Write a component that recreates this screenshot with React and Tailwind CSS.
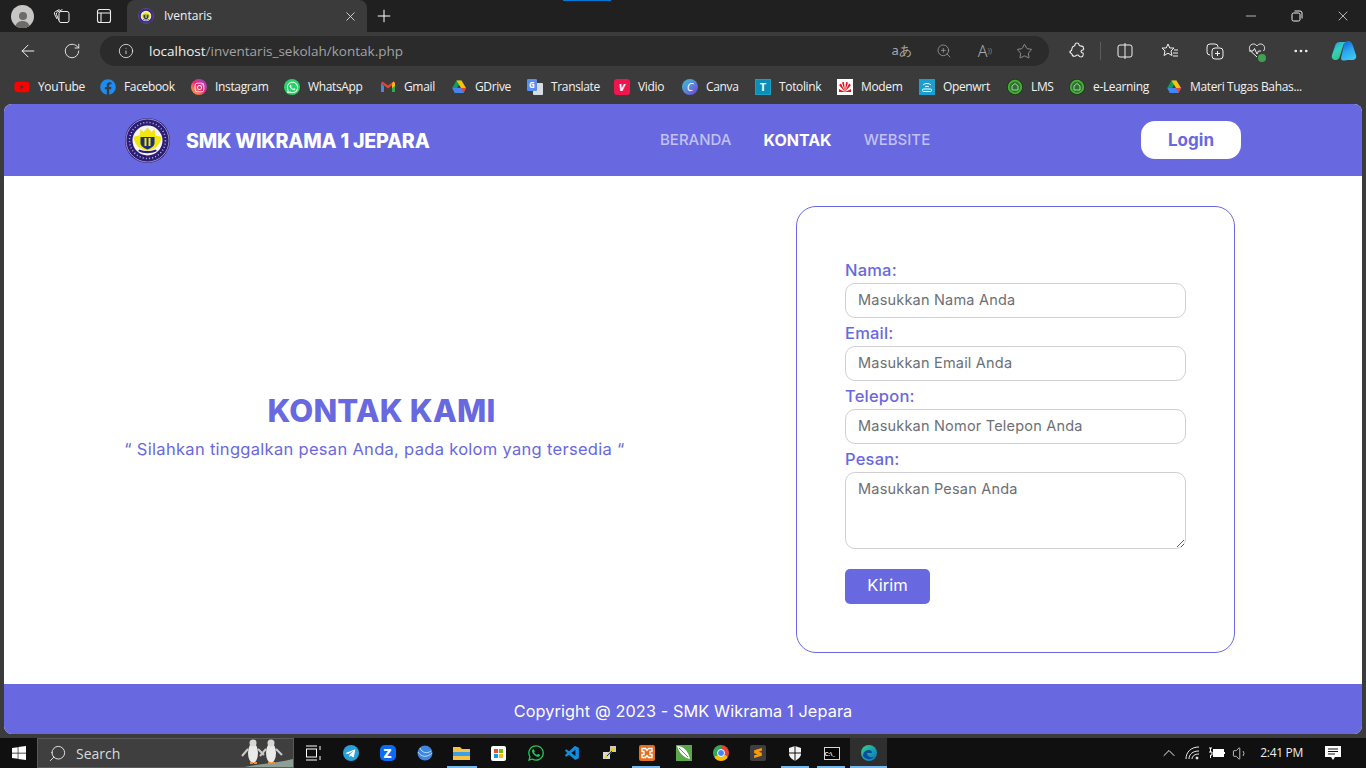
import {
  ArrowLeft, RotateCw, Info, ZoomIn, Star, Plus, X, Minus, Search, ChevronUp, Volume1, MoreHorizontal,
} from "lucide-react";
import {
  FaYoutube, FaFacebook, FaInstagram, FaWhatsapp, FaTelegramPlane, FaWindows,
} from "react-icons/fa";
import { SiSublimetext } from "react-icons/si";
import { VscVscode } from "react-icons/vsc";

const CHROME_FONT = "font-['Open_Sans','Noto_Sans',sans-serif]";

function SchoolLogo({ size = 45 }) {
  return (
    <svg width={size} height={size} viewBox="0 0 45 45" className="shrink-0">
      <circle cx="22.5" cy="22.5" r="22.500" fill="#2b1c74" />
      <circle cx="22.5" cy="22.5" r="21.500" fill="none" stroke="#cfcde8" strokeWidth="0.700" />
      <circle cx="22.5" cy="22.5" r="18" fill="none" stroke="#bdb9e2" strokeWidth="1.500" strokeDasharray="1 2.200" />
      <circle cx="22.5" cy="22.5" r="15" fill="#f4f4fa" />
      <path d="M8.500 19c2-1 4-1.500 6-1.500l1-6.500 3 3 4-4.500 4 4.500 3-3 1 6.500c2 0 4 .5 6 1.500-1 7-5 12-14 14-9-2-13-7-14-14z" fill="#f3e60c" />
      <path d="M15.500 19h14v6c0 3-3 5-7 6.500-4-1.500-7-3.500-7-6.500z" fill="#1c2f78" />
      <path d="M19.500 20h2v8h-2zM23.500 20h2v8h-2z" fill="#f3e60c" />
      <path d="M13 33c6 3 13 3 19 0l-1.500-1.500c-5 2-11 2-16 0z" fill="#2b1c74" />
    </svg>
  );
}

function Gmail() {
  return (
    <svg width="16" height="16" viewBox="0 0 16 16">
      <path d="M1 4v9h3V7z" fill="#4285f4" />
      <path d="M15 4v9h-3V7z" fill="#34a853" />
      <path d="M1 4l7 5.500L15 4l-1.500-1.500L8 6.500 2.500 2.500z" fill="#ea4335" />
      <path d="M12 4.500l1.500-2L15 4v3l-3 2z" fill="#fbbc04" />
    </svg>
  );
}

function Drive() {
  return (
    <svg width="16" height="16" viewBox="0 0 16 16">
      <path d="M5.500 1.500h5L6.200 9H1.200z" fill="#0f9d58" />
      <path d="M10.500 1.500L15 9h-5L5.500 1.500z" fill="#ffc107" />
      <path d="M1.200 9h13.800l-2.500 5H3.700z" fill="#4285f4" />
      <path d="M10 9h5l-2.500 5z" fill="#ea4335" />
    </svg>
  );
}

function Tile({ bg, children }) {
  return <span className={`flex h-4 w-4 items-center justify-center rounded-[3px] text-white ${bg}`}>{children}</span>;
}

function LmsIcon() {
  return (
    <svg width="16" height="16" viewBox="0 0 16 16">
      <circle cx="8" cy="8" r="8" fill="#1b3a1b" />
      <circle cx="8" cy="8" r="6.300" fill="#2f6e34" stroke="#4caf38" strokeWidth="1.800" />
      <path d="M5 11V7l3-2.500L11 7v4z" fill="none" stroke="#9adf8c" strokeWidth="1" />
    </svg>
  );
}

function TranslateIcon() {
  return (
    <span className="relative block h-4 w-4">
      <span className="absolute bottom-0 right-0 h-3 w-[10px] rounded-[1px] bg-[#d8dde3]" />
      <span className="absolute left-0 top-0 flex h-3 w-[10px] items-center justify-center rounded-[1px] bg-[#5a8df0] text-[8px] font-bold leading-none text-white">G</span>
    </span>
  );
}

const BOOKMARKS = [
  { label: "YouTube", w: "w-[86px]", icon: <FaYoutube size={16} className="text-[#ff0000]" /> },
  { label: "Facebook", w: "w-[91px]", icon: <FaFacebook size={16} className="text-[#1b8cf2]" /> },
  { label: "Instagram", w: "w-[93px]", icon: <Tile bg="rounded-full bg-gradient-to-tr from-[#fdb32b] via-[#e8246c] to-[#8a30d8]"><FaInstagram size={11} /></Tile> },
  { label: "WhatsApp", w: "w-[96px]", icon: <Tile bg="rounded-full bg-[#25d366]"><FaWhatsapp size={13} /></Tile> },
  { label: "Gmail", w: "w-[71px]", icon: <Gmail /> },
  { label: "GDrive", w: "w-[76px]", icon: <Drive /> },
  { label: "Translate", w: "w-[87px]", icon: <TranslateIcon /> },
  { label: "Vidio", w: "w-[68px]", icon: <Tile bg="bg-[#f0144f] text-[12px] font-bold italic">v</Tile> },
  { label: "Canva", w: "w-[73px]", icon: <Tile bg="rounded-full bg-gradient-to-br from-[#18c2cf] to-[#6a35dc] text-[11px] italic">C</Tile> },
  { label: "Totolink", w: "w-[82px]", icon: <Tile bg="rounded-none border border-[#1aa0c4] bg-[#0a8fb8] text-[11px] font-bold">T</Tile> },
  { label: "Modem", w: "w-[82px]", icon: (
    <span className="flex h-4 w-4 items-center justify-center bg-white">
      <svg width="14" height="12" viewBox="0 0 14 12"><path d="M7 11L4 1.500 6 1l1 10 1-10 2 .500zM7 11L1 4l2-1.500zM7 11l6-7-2-1.500zM7 11H1V8zM7 11h6V8z" fill="#e5141d" /></svg>
    </span>
  ) },
  { label: "Openwrt", w: "w-[88px]", icon: (
    <span className="flex h-4 w-4 items-center justify-center bg-[#1a9fd0]">
      <svg width="12" height="12" viewBox="0 0 12 12" fill="none" stroke="#fff"><path d="M2 4c2-2 6-2 8 0M4 6c1-1 3-1 4 0" /><rect x="1.500" y="8" width="9" height="2.500" rx="1" /></svg>
    </span>
  ) },
  { label: "LMS", w: "w-[62px]", icon: <LmsIcon /> },
  { label: "e-Learning", w: "w-[97px]", icon: <LmsIcon /> },
  { label: "Materi Tugas Bahas...", w: "w-[150px]", icon: <Drive /> },
];

function Bookmark({ item }) {
  return (
    <div className={`flex shrink-0 items-center gap-2 ${item.w}`}>
      <span className="flex w-4 shrink-0 items-center justify-center">{item.icon}</span>
      <span className="whitespace-nowrap text-[12px] tracking-[-0.35px] text-[#f2f2f2]">{item.label}</span>
    </div>
  );
}

function TitleBar() {
  return (
    <div className="relative flex h-8 items-center bg-[#202020] text-[#ededed]">
      <div className="absolute left-[563px] top-0 h-px w-12 bg-[#0078d4]" />
      <div className="ml-[11px] flex h-[23px] w-[23px] items-end justify-center overflow-hidden rounded-full bg-[#c8c6c4]">
        <div className="flex flex-col items-center">
          <span className="h-2 w-2 rounded-full bg-[#6b6b6b]" />
          <span className="mt-px h-[7px] w-[15px] rounded-t-full bg-[#6b6b6b]" />
        </div>
      </div>
      <svg width="18" height="18" viewBox="0 0 18 18" fill="none" stroke="#ededed" strokeWidth="1" className="ml-[19px]">
        <rect x="6" y="4.500" width="10" height="11" rx="2" />
        <path d="M6 13.500L3.500 7.500a2 2 0 0 1 1-2.500l5-2.500M4 12L1.500 7a2 2 0 0 1 1-2.500l4-2" />
      </svg>
      <svg width="16" height="16" viewBox="0 0 16 16" fill="none" stroke="#ededed" strokeWidth="1.100" className="ml-[25px]">
        <rect x="1.500" y="1.500" width="13" height="13" rx="2" />
        <path d="M1.500 5h13M5 5v9.500" />
      </svg>
      <div className="ml-[15px] flex h-8 w-[240px] items-center self-end rounded-t-lg bg-[#3b3b3b]">
        <span className="ml-[11px]"><SchoolLogo size={16} /></span>
        <span className={`ml-[10px] text-[12px] text-[#f2f2f2] ${CHROME_FONT}`}>Iventaris</span>
        <X size={15} strokeWidth={1.3} className="ml-auto mr-[9px]" />
      </div>
      <Plus size={20} strokeWidth={1.2} className="ml-[7px] text-white" />
      <div className="ml-auto flex items-center text-white">
        <Minus size={16} strokeWidth={1} className="mr-[32px]" />
        <svg width="12" height="12" viewBox="0 0 12 12" fill="none" stroke="#ededed" className="mr-[32px]">
          <rect x="1" y="3" width="8" height="8" rx="1.500" />
          <path d="M3.500 1h5.500a2 2 0 0 1 2 2v5.500" />
        </svg>
        <X size={16} strokeWidth={1} className="mr-[15px]" />
      </div>
    </div>
  );
}

function ToolBar() {
  return (
    <div className="flex h-[38px] items-center bg-[#3b3b3b] text-[#f0f0f0]">
      <ArrowLeft size={20} strokeWidth={1.2} className="ml-[18px]" />
      <RotateCw size={18} strokeWidth={1.2} className="ml-[25px]" />
      <div className="ml-[19px] flex h-[30px] w-[949px] items-center rounded-full bg-[#2b2b2b]">
        <Info size={16} strokeWidth={1.2} className="ml-[18px]" />
        <span className={`ml-[15px] text-[13.500px] ${CHROME_FONT}`}>
          localhost<span className="text-[#a3a3a3]">/inventaris_sekolah/kontak.php</span>
        </span>
        <div className="ml-auto flex items-center text-[#a8a8a8]">
          <span className="mr-[24px] text-[13px]">aあ</span>
          <ZoomIn size={16} strokeWidth={1.1} className="mr-[26px]" />
          <span className="mr-[24px] text-[16px] font-light leading-none">A<sup className="text-[8px]">))</sup></span>
          <Star size={17} strokeWidth={1.1} className="mr-[16px]" />
        </div>
      </div>
      <svg width="18" height="18" viewBox="0 0 18 18" fill="none" stroke="#f0f0f0" strokeWidth="1.100" className="ml-[19px]">
        <path d="M7 3a2 2 0 0 1 4 0c0 1 3 1 4 1.500.5 1 .5 3 0 3.500-1 0-2 .5-2 1.500s1 1.500 2 1.500c.5 1 0 3-.5 3.500-1 .5-3 .5-3.500-.5-.5-1-1.500-1.200-2.500-.7-1 .5-1 1-2 1-1.500 0-2.500-1-2.500-2 0-1-1.500-1-2-1.800C2 11 2 9 3.500 8.500 4 7 4 5 5 4.500 6 4 7 4 7 3z" />
      </svg>
      <span className="ml-[14px] h-[18px] w-px bg-[#5c5c5c]" />
      <svg width="16" height="16" viewBox="0 0 16 16" fill="none" stroke="#f0f0f0" className="ml-[16px]">
        <rect x="1" y="2" width="14" height="12" rx="2" /><path d="M8 0v16" />
      </svg>
      <svg width="18" height="18" viewBox="0 0 18 18" fill="none" stroke="#f0f0f0" className="ml-[28px]">
        <path d="M7 2l1.800 4H13l-3 3 1 4.500-4-2.300-4 2.300 1-4.500-3-3h4.200zM13 8h4M12 11h5M12 14h5" />
      </svg>
      <svg width="18" height="18" viewBox="0 0 18 18" fill="none" stroke="#f0f0f0" className="ml-[27px]">
        <rect x="6" y="6" width="11" height="11" rx="3" />
        <path d="M11.500 9v5M9 11.500h5M4 13a3 3 0 0 1-3-3V5a3 3 0 0 1 3-3h5a3 3 0 0 1 3 3" />
      </svg>
      <span className="relative ml-[24px] h-[18px] w-[18px]">
        <svg width="18" height="18" viewBox="0 0 18 18" fill="none" stroke="#f0f0f0">
          <path d="M9 15L2.500 9C0 6 2 2 5.500 2 7 2 8.300 3 9 4c.7-1 2-2 3.500-2C16 2 18 6 15.500 9M1 9h4l1.500-2.500L9 12l1.500-3H13" />
        </svg>
        <span className="absolute bottom-[-2px] right-0 h-2 w-2 rounded-full bg-[#3fa34d]" />
      </span>
      <MoreHorizontal size={18} strokeWidth={1.6} className="ml-[26px]" />
      <svg width="26" height="24" viewBox="0 0 26 24" className="ml-[21px]">
        <defs>
          <linearGradient id="cp1" x1="0" y1="0" x2="0.600" y2="1"><stop offset="0" stopColor="#2a8fe0" /><stop offset="0.500" stopColor="#35d0c0" /><stop offset="1" stopColor="#2fc47a" /></linearGradient>
          <linearGradient id="cp2" x1="0.300" y1="0" x2="0.700" y2="1"><stop offset="0" stopColor="#1464d8" /><stop offset="0.500" stopColor="#2ca8f0" /><stop offset="1" stopColor="#40c8f8" /></linearGradient>
        </defs>
        <path d="M17 2c3 0 4 2 5 5l3 9c1 3-1 5-4 5h-5c-3 1-6 1-6-2l3-14c.5-2 2-3 4-3z" fill="url(#cp2)" />
        <path d="M9 3h6c-2 1-2.500 2-3 4l-3 10c-.5 2-2 4-4 4-3 0-5-2-4-5l3-9c1-3 2-4 5-4z" fill="url(#cp1)" />
      </svg>
    </div>
  );
}

function BookmarkBar() {
  return (
    <div className={`flex h-[34px] items-center bg-[#3b3b3b] pl-[14px] ${CHROME_FONT}`}>
      {BOOKMARKS.map((b) => <Bookmark key={b.label} item={b} />)}
    </div>
  );
}

function Navbar() {
  return (
    <nav className="flex h-[72px] shrink-0 items-center bg-[#6868e0] pl-[121px]">
      <SchoolLogo />
      <span className="ml-4 w-[244px] whitespace-nowrap pt-[3px] text-[19.600px] font-extrabold tracking-[-0.2px] text-white">SMK WIKRAMA 1 JEPARA</span>
      <div className="ml-[230px] flex items-center gap-8 text-[15px] font-medium text-[#c1c1f3]">
        <span>BERANDA</span>
        <span className="text-[16px] font-bold text-white">KONTAK</span>
        <span>WEBSITE</span>
      </div>
      <button className="ml-auto mr-[121px] h-[38px] w-[100px] rounded-[14px] bg-white pt-px text-[17px] font-bold text-[#6868e0]">Login</button>
    </nav>
  );
}

function Field({ label, placeholder }) {
  return (
    <div>
      <label className="block h-7 pt-[3px] text-[16.500px] font-medium leading-6 tracking-[0.2px] text-[#6868e0]">{label}</label>
      <input
        readOnly
        placeholder={placeholder}
        className="block h-[35px] w-full rounded-[10px] border border-[#cfcfd4] px-3 pb-0.5 text-[14.500px] tracking-[0.2px] placeholder:text-[#6c6f75]"
      />
    </div>
  );
}

function ContactForm() {
  return (
    <div className="ml-[172px] mt-[30px] h-[447px] w-[439px] shrink-0 self-start rounded-[20px] border border-[#6868e0] p-12">
      <Field label="Nama:" placeholder="Masukkan Nama Anda" />
      <Field label="Email:" placeholder="Masukkan Email Anda" />
      <Field label="Telepon:" placeholder="Masukkan Nomor Telepon Anda" />
      <div>
        <label className="block h-7 pt-[3px] text-[16.500px] font-medium leading-6 tracking-[0.2px] text-[#6868e0]">Pesan:</label>
        <textarea
          readOnly
          placeholder="Masukkan Pesan Anda"
          className="block h-[77px] w-full rounded-[10px] border border-[#cfcfd4] px-3 py-[5px] text-[14.500px] tracking-[0.2px] placeholder:text-[#6c6f75]"
        />
      </div>
      <button className="mt-5 h-[35px] w-[85px] rounded-[5px] bg-[#6868e0] pb-0.5 text-[16.500px] font-normal text-white">Kirim</button>
    </div>
  );
}

function Page() {
  return (
    <div className="mx-1 flex h-[630px] flex-col overflow-hidden rounded-[8px] bg-white font-['Inter',sans-serif]">
      <Navbar />
      <main className="flex flex-1 items-center pl-[121px]">
        <div className="mb-[8px] flex w-[499px] shrink-0 flex-col items-center">
          <h1 className="ml-[14px] text-[31px] font-extrabold leading-10 tracking-[0.2px] text-[#6868e0]">KONTAK KAMI</h1>
          <p className="mt-[6px] whitespace-nowrap text-[16.500px] leading-6 tracking-[0.3px] text-[#6868e0]">“ Silahkan tinggalkan pesan Anda, pada kolom yang tersedia “</p>
        </div>
        <ContactForm />
      </main>
      <footer className="flex h-[50px] shrink-0 items-center justify-center bg-[#6868e0] pt-1 text-[16.300px] font-normal tracking-[0.1px] text-white">
        Copyright @ 2023 - SMK Wikrama 1 Jepara
      </footer>
    </div>
  );
}

function TaskIcon({ active, children }) {
  return (
    <div className={`relative flex h-[30px] w-[37px] shrink-0 items-center justify-center ${active ? "bg-[#2f2f2f]" : ""}`}>
      {children}
      {active && <span className="absolute bottom-0 left-0 right-0 h-[2px] bg-[#76b9ed]" />}
    </div>
  );
}

function Penguin({ x }) {
  return (
    <g transform={`translate(${x} 0)`}>
      <ellipse cx="8" cy="14" rx="5" ry="10" fill="#e9ebe8" />
      <circle cx="8" cy="4" r="3.500" fill="#d6d8d4" />
      <path d="M3 10L-3 17M13 10l6 6" stroke="#c8cbc6" strokeWidth="2" />
      <path d="M5 24h3M9 24h3" stroke="#ee8a3c" strokeWidth="2" />
    </g>
  );
}

function Taskbar() {
  return (
    <div className={`mt-1 flex h-[30px] items-center bg-[#101010] text-white ${CHROME_FONT}`}>
      <div className="flex w-[37px] shrink-0 justify-center"><FaWindows size={16} /></div>
      <div className="relative flex h-[30px] w-[257px] shrink-0 items-center overflow-hidden border border-[#5a5a5a] bg-[#3f3f3f]">
        <Search size={19} strokeWidth={1.2} className="ml-[10px] -scale-x-100 text-[#e6e6e6]" />
        <span className="ml-[9px] text-[14px] text-[#dadada]">Search</span>
        <svg width="56" height="30" viewBox="0 0 56 30" className="absolute right-0 top-0">
          <path d="M0 30c15-5 35-5 56-10v10z" fill="#8e9e95" />
          <Penguin x={8} />
          <Penguin x={26} />
        </svg>
      </div>
      <TaskIcon>
        <svg width="16" height="16" viewBox="0 0 16 16" fill="none" stroke="#fff"><rect x="1.500" y="4" width="10" height="8" /><path d="M1 1h11M1 15h11M15 1v4M15 8h0M15 11v4" /></svg>
      </TaskIcon>
      <div className="w-px shrink-0" />
      <TaskIcon><span className="flex h-4 w-4 items-center justify-center rounded-full bg-[#2a9fd8]"><FaTelegramPlane size={11} /></span></TaskIcon>
      <TaskIcon><span className="flex h-4 w-4 items-center justify-center rounded-[5px] bg-[#0a6cf5] text-[13px] font-extrabold leading-none">Z</span></TaskIcon>
      <TaskIcon>
        <svg width="16" height="16" viewBox="0 0 16 16"><circle cx="8" cy="8" r="7.500" fill="#3f86e0" /><path d="M1 7c3 5 9 6 14 1M3 3c2 5 7 6 11 3" fill="none" stroke="#bcdcf8" /></svg>
      </TaskIcon>
      <div className="relative flex h-[30px] w-[37px] shrink-0 items-center justify-center">
        <svg width="17" height="15" viewBox="0 0 17 15"><path d="M0 1h7l2 2h8v11H0z" fill="#f6c344" /><path d="M0 6h17v4H0z" fill="#3aa0e8" /></svg>
        <span className="absolute bottom-0 left-[4px] right-[3px] h-[2px] bg-[#76b9ed]" />
      </div>
      <TaskIcon>
        <span className="grid h-[15px] w-[15px] grid-cols-2 gap-px rounded-[2px] bg-white p-[3px]">
          <i className="bg-[#f25022]" /><i className="bg-[#7fba00]" /><i className="bg-[#00a4ef]" /><i className="bg-[#ffb900]" />
        </span>
      </TaskIcon>
      <TaskIcon><FaWhatsapp size={18} className="text-[#25c65a]" /></TaskIcon>
      <TaskIcon><VscVscode size={17} className="text-[#0e8fe0]" /></TaskIcon>
      <TaskIcon>
        <svg width="16" height="16" viewBox="0 0 16 16"><rect x="8" y="1" width="6" height="6" fill="#c9c9c9" /><rect x="1" y="7" width="7" height="7" fill="#d8d8d8" /><path d="M3 13l9-10" stroke="#f1d000" strokeWidth="2" /><path d="M5 11l5-5" stroke="#1a2f90" strokeWidth="1" /></svg>
      </TaskIcon>
      <div className="relative flex h-[30px] w-[37px] shrink-0 items-center justify-center">
        <svg width="16" height="16" viewBox="0 0 16 16">
          <rect width="16" height="16" rx="2" fill="#e2701f" />
          <path d="M3 3.500h3.500L8 5.500l1.500-2H13v3h-2v3h2v3H9.500L8 10.500l-1.500 2H3v-3h2v-3H3z" fill="none" stroke="#fff" strokeWidth="1.300" />
        </svg>
        <span className="absolute bottom-0 left-[4px] right-[5px] h-[2px] bg-[#76b9ed]" />
      </div>
      <TaskIcon>
        <svg width="16" height="16" viewBox="0 0 16 16"><rect width="16" height="16" fill="#5ba84a" /><path d="M1 1c6 0 11 4 13 13C8 13 3 8 1 1z" fill="#fff" /><path d="M3 3l9 9" stroke="#5ba84a" /></svg>
      </TaskIcon>
      <TaskIcon>
        <span className="flex h-4 w-4 items-center justify-center rounded-full bg-[conic-gradient(#ea4335_0_33%,#fbbc04_33%_66%,#34a853_66%_100%)]">
          <span className="h-[8px] w-[8px] rounded-full border border-white bg-[#4285f4]" />
        </span>
      </TaskIcon>
      <TaskIcon><span className="flex h-4 w-4 items-center justify-center rounded-[2px] bg-[#3e3e3e]"><SiSublimetext size={10} className="text-[#ff9800]" /></span></TaskIcon>
      <div className="relative flex h-[30px] w-[37px] shrink-0 items-center justify-center">
        <svg width="14" height="15" viewBox="0 0 14 15"><path d="M7 0l6 2v6c0 3-3 5-6 7-3-2-6-4-6-7V2z" fill="#f2f2f2" /><path d="M7 0v15M1 7h12" stroke="#101010" /></svg>
        <span className="absolute bottom-0 left-[5px] right-[4px] h-[2px] bg-[#76b9ed]" />
      </div>
      <div className="relative flex h-[30px] w-[37px] shrink-0 items-center justify-center">
        <span className="h-[13px] w-[16px] border border-[#d5d5d5] bg-black pt-[2px] text-[6px] font-bold leading-[8px]">C:\_</span>
        <span className="absolute bottom-0 left-[4px] right-[5px] h-[2px] bg-[#76b9ed]" />
      </div>
      <TaskIcon active>
        <svg width="16" height="16" viewBox="0 0 16 16">
          <defs><linearGradient id="edge" x1="0" y1="0" x2="1" y2="1"><stop offset="0" stopColor="#2fd58c" /><stop offset="1" stopColor="#0c6fc4" /></linearGradient></defs>
          <circle cx="8" cy="8" r="8" fill="url(#edge)" />
          <path d="M2 11c0-4 3-6 6-6 2 0 3 1 3 3H6c0 3 3 5 7 4-2 3-9 3-11-1z" fill="#0a4f9c" />
        </svg>
      </TaskIcon>
      <div className="ml-auto flex items-center text-[#eee]">
        <ChevronUp size={20} strokeWidth={1.2} className="mr-[6px]" />
        <svg width="16" height="14" viewBox="0 0 16 14" fill="none" stroke="#eee" className="mr-[7px]"><path d="M1 13C1 6 6 1 14 1M4 13c0-5 4-8 10-8M7 13c0-3 3-5 7-5" /><circle cx="12" cy="12" r="1" fill="#fff" /></svg>
        <svg width="17" height="12" viewBox="0 0 17 12" fill="none" stroke="#fff" className="mr-[7px]"><path d="M1 1h3M2.500 1v4M1 5h3v3H2.500v3" /><rect x="5.500" y="2.500" width="10" height="7" fill="#fff" /><path d="M16.500 5v2" /></svg>
        <Volume1 size={17} strokeWidth={1.1} className="mr-[11px]" />
        <span className="mr-[22px] text-[12px] tracking-[-0.3px]">2:41 PM</span>
        <svg width="16" height="16" viewBox="0 0 16 16" className="mr-[25px]"><path d="M0 1h16v11H10l-2 3-2-3H0z" fill="#fff" /><path d="M3 4h10M3 6.500h10M3 9h7" stroke="#101010" /></svg>
      </div>
    </div>
  );
}

export default function App() {
  return (
    <div className="flex h-[768px] w-[1366px] flex-col overflow-hidden bg-[#3b3b3b]">
      <TitleBar />
      <ToolBar />
      <BookmarkBar />
      <Page />
      <Taskbar />
    </div>
  );
}
